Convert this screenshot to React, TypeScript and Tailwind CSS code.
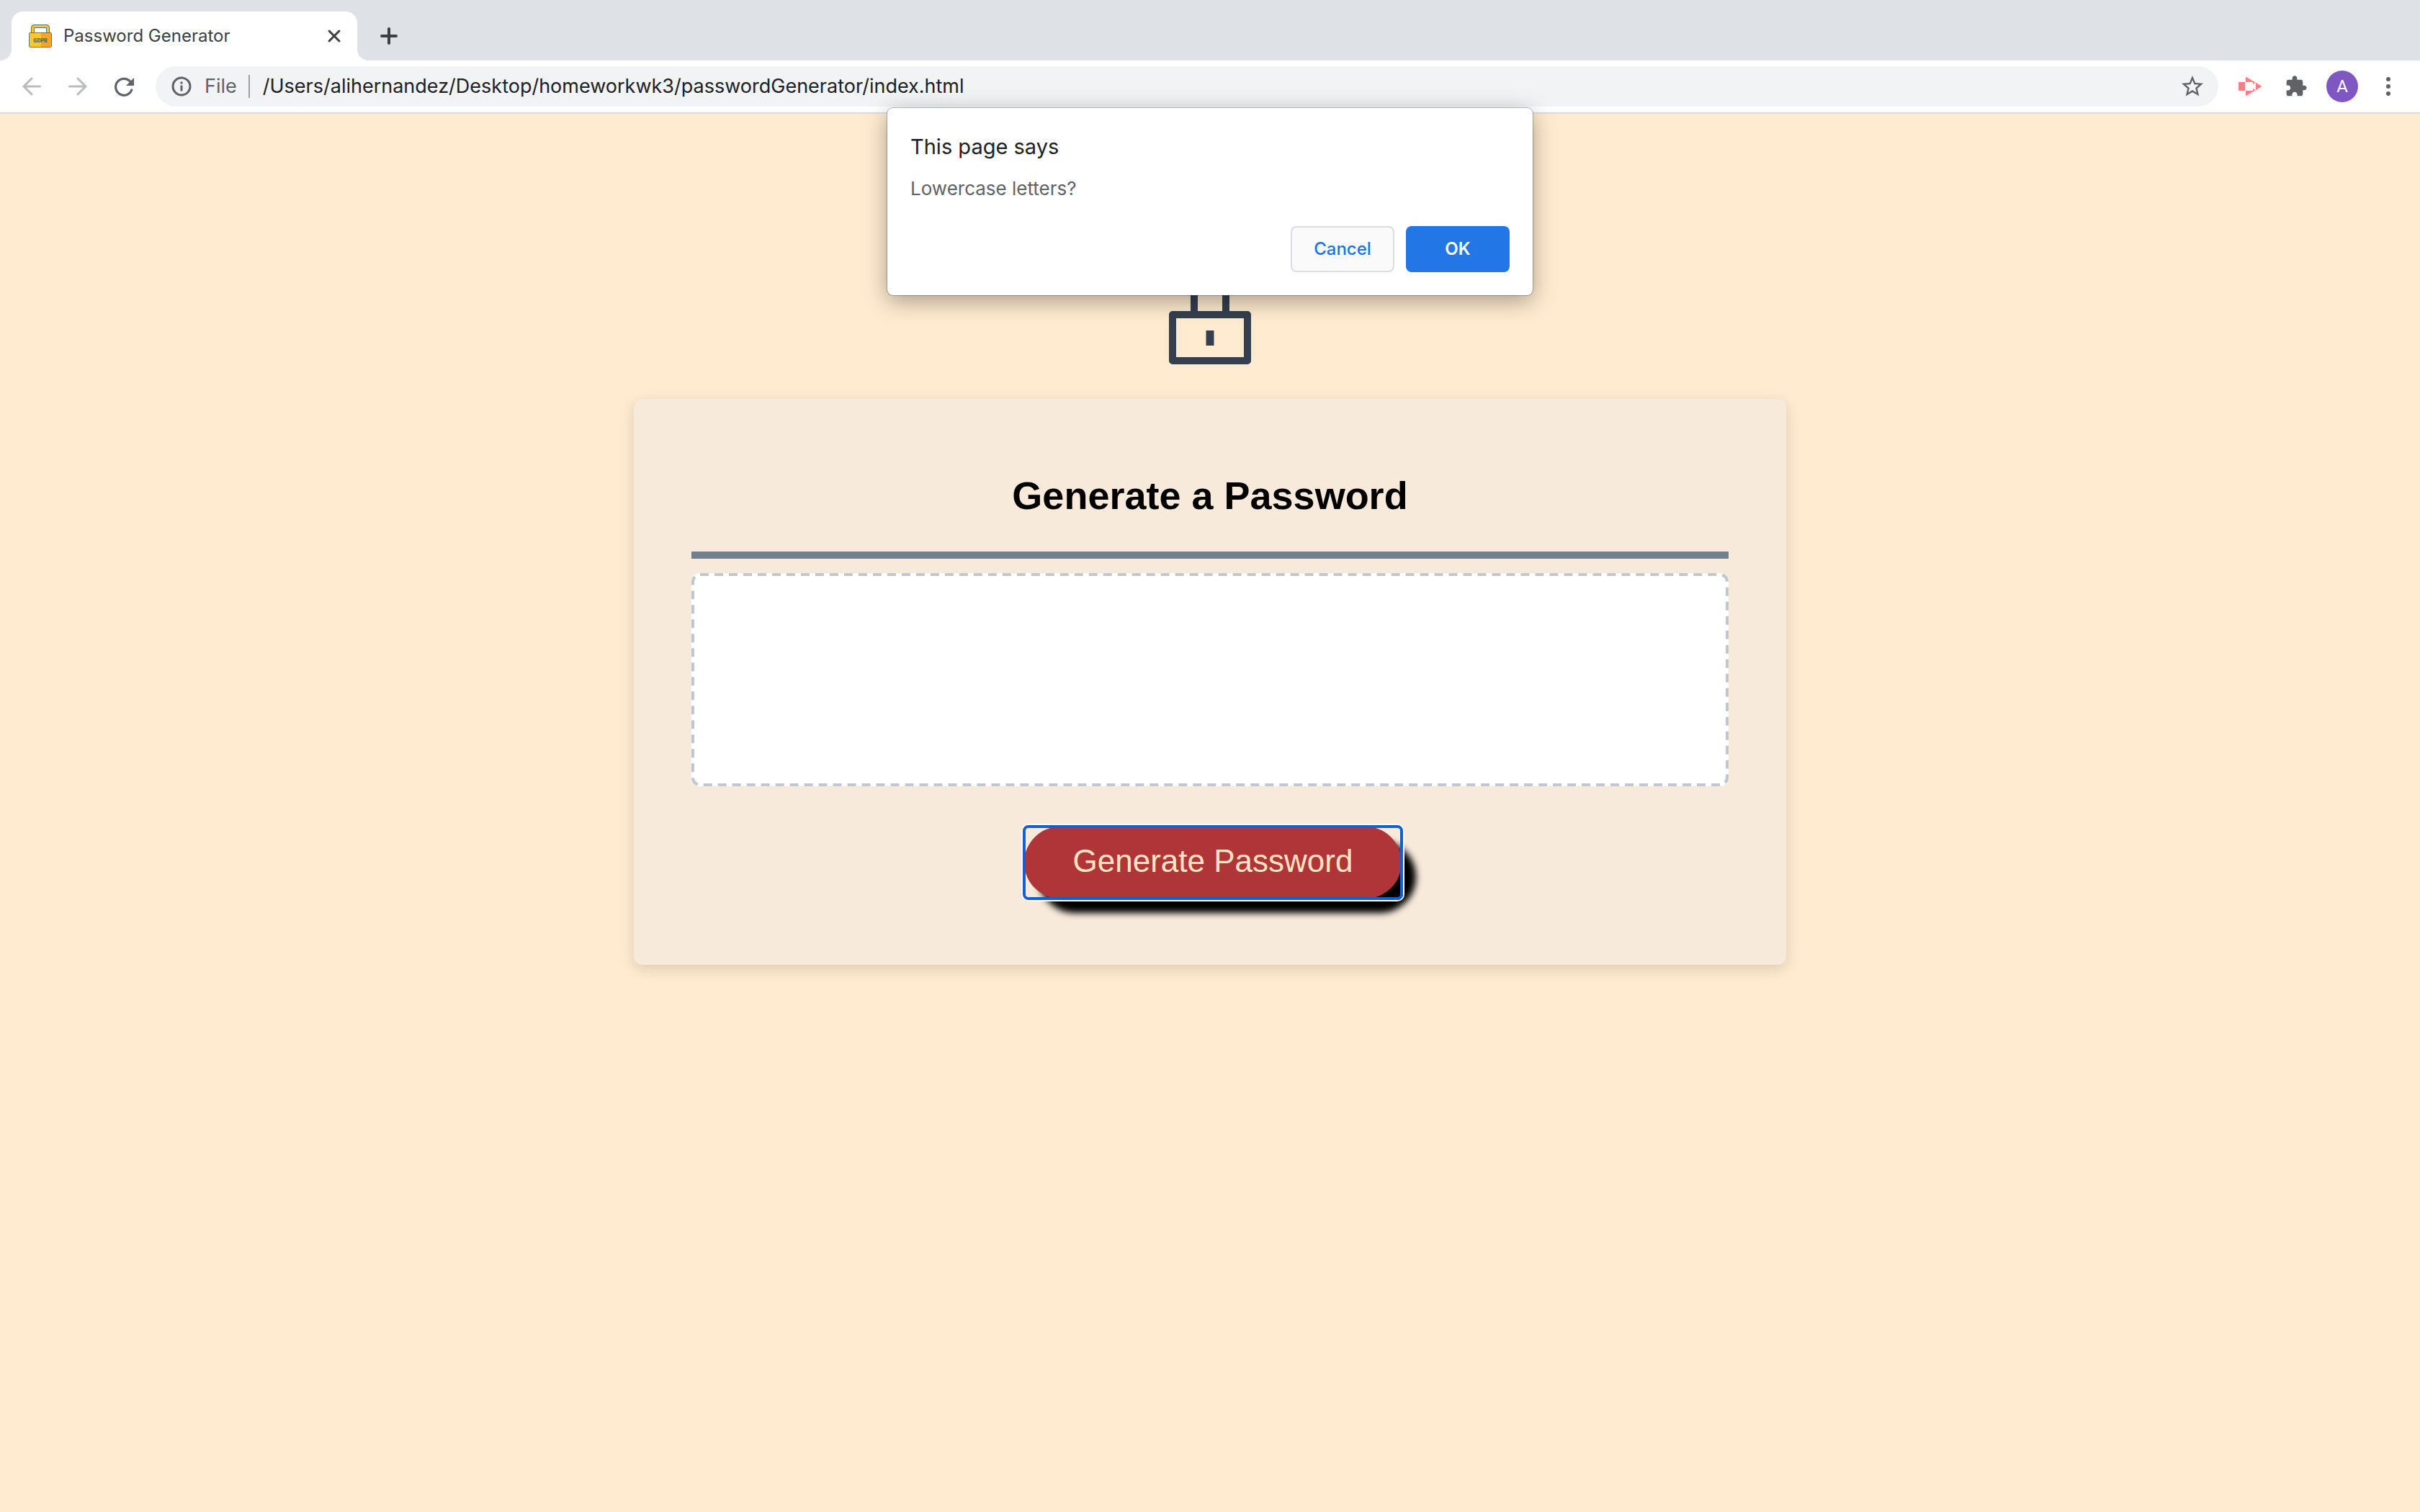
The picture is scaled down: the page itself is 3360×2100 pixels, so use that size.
import React from "react";

const iconButton = "flex size-8 shrink-0 items-center justify-center";

function Favicon() {
  return (
    <svg viewBox="0 0 32 32" className="size-8 shrink-0" aria-hidden="true">
      <path d="M5.500 13V5Q5.500 2.500 8 2.500H24Q26.500 2.500 26.500 5V13" fill="none" stroke="#4f7482" strokeWidth="5" />
      <path d="M5.500 13V5Q5.500 2.500 8 2.500H24Q26.500 2.500 26.500 5V13" fill="none" stroke="#f8c62e" strokeWidth="3" />
      <rect x="0.500" y="11.500" width="31" height="20" rx="1" fill="#f8c62e" stroke="#5a7a70" />
      <path d="M17 12H31V31H17Z" fill="#f4a52b" />
      <text x="16" y="25" textAnchor="middle" fontSize="7" fontWeight="900" fill="#5f6f4a" className="font-['Inter',sans-serif]">GDPR</text>
    </svg>
  );
}

function TabStrip() {
  return (
    <header className="flex h-21 items-end bg-[#dee1e6] pl-4">
      <div className="relative flex h-17 w-120 items-center rounded-t-2xl bg-white pr-5 pl-6">
        <span className="absolute bottom-0 -left-4 size-4 bg-[radial-gradient(circle_at_0_0,#dee1e6_16px,#fff_16px)]" />
        <span className="absolute -right-4 bottom-0 size-4 bg-[radial-gradient(circle_at_100%_0,#dee1e6_16px,#fff_16px)]" />
        <Favicon />
        <span className="ml-4 flex-1 text-2xl text-[#3c4043]">Password Generator</span>
        <button type="button" aria-label="Close tab" className="flex size-6 items-center justify-center">
          <svg viewBox="0 0 24 24" className="size-6" stroke="#3c4043" strokeWidth="3" strokeLinecap="round">
            <path d="M5 5L19 19M19 5L5 19" />
          </svg>
        </button>
      </div>
      <button type="button" aria-label="New tab" className="mb-5 ml-7.5 flex size-7 items-center justify-center">
        <svg viewBox="0 0 28 28" className="size-7" stroke="#3c4043" strokeWidth="4" strokeLinecap="round">
          <path d="M14 4V24M4 14H24" />
        </svg>
      </button>
    </header>
  );
}

function Toolbar() {
  return (
    <nav className="flex h-[74px] items-center border-b-2 border-[#dadce0] bg-white px-7">
      <button type="button" aria-label="Back" className={iconButton}>
        <svg viewBox="0 0 32 32" className="size-8" fill="none" stroke="#babcbe" strokeWidth="3" strokeLinecap="round">
          <path d="M27.500 16H5M16 5L5 16L16 27" />
        </svg>
      </button>
      <button type="button" aria-label="Forward" className={iconButton + " ml-8"}>
        <svg viewBox="0 0 32 32" className="size-8" fill="none" stroke="#babcbe" strokeWidth="3" strokeLinecap="round">
          <path d="M4.500 16H27M16 5L27 16L16 27" />
        </svg>
      </button>
      <button type="button" aria-label="Reload" className={iconButton + " ml-8"}>
        <svg viewBox="0 0 32 32" className="size-8" fill="none" stroke="#5f6368" strokeWidth="3.200" strokeLinecap="round">
          <path d="M26.800 21A11.500 11.500 0 1 1 25 9.500" />
          <path d="M30 4V15H19Z" fill="#5f6368" stroke="none" />
        </svg>
      </button>
      <div className="ml-7 flex h-14 flex-1 items-center rounded-full bg-[#f1f3f4] pr-4.5 pl-5.5">
        <svg viewBox="0 0 28 28" className="size-7 shrink-0" fill="none" stroke="#5f6368" strokeWidth="3" aria-hidden="true">
          <circle cx="14" cy="14" r="12" />
          <path d="M14 12.500V20.500M14 7.500V10.500" />
        </svg>
        <span className="ml-4.5 text-[27px] text-[#5f6368]">File</span>
        <span className="ml-4 h-8 w-0.5 bg-[#9aa0a6]" />
        <input
          aria-label="Address"
          readOnly
          value="/Users/alihernandez/Desktop/homeworkwk3/passwordGenerator/index.html"
          className="ml-4.5 flex-1 bg-transparent text-[27px] text-[#202124] outline-none"
        />
        <button type="button" aria-label="Bookmark this page" className="flex size-9 shrink-0 items-center justify-center">
          <svg viewBox="0 0 24 24" className="size-9" fill="#5f6368">
            <path d="M22 9.240l-7.190-.620L12 2 9.190 8.630 2 9.240l5.460 4.730L5.820 21 12 17.270 18.180 21l-1.630-7.030L22 9.240zM12 15.400l-3.760 2.270 1-4.280-3.320-2.880 4.380-.380L12 6.100l1.710 4.040 4.380.380-3.320 2.880 1 4.280L12 15.400z" />
          </svg>
        </button>
      </div>
      <button type="button" aria-label="Screen recorder" className={iconButton + " ml-7"}>
        <svg viewBox="0 0 32 32" className="size-8" fill="#ff8080">
          <path d="M1 10H9V22H1Q0 22 0 21V11Q0 10 1 10Z" />
          <path d="M10 4Q10 2.500 11.500 3.300L31 15Q32.500 16 31 17L11.500 28.700Q10 29.500 10 28Z" />
          <path d="M10 10H19Q20 10 20 11V13L24 10.500V21.500L20 19V21Q20 22 19 22H10Z" fill="#fff" />
        </svg>
      </button>
      <button type="button" aria-label="Extensions" className={iconButton + " ml-8"}>
        <svg viewBox="0 0 24 24" className="size-8" fill="#5f6368">
          <path d="M20.500 11H19V7c0-1.100-.900-2-2-2h-4V3.500C13 2.120 11.880 1 10.500 1S8 2.120 8 3.500V5H4c-1.100 0-1.990.900-1.990 2v3.800H3.500c1.490 0 2.700 1.210 2.700 2.700s-1.210 2.700-2.700 2.700H2V20c0 1.100.900 2 2 2h3.800v-1.500c0-1.490 1.210-2.700 2.700-2.700 1.490 0 2.700 1.210 2.700 2.700V22H17c1.100 0 2-.900 2-2v-4h1.500c1.380 0 2.500-1.120 2.500-2.500S21.880 11 20.500 11z" />
        </svg>
      </button>
      <button type="button" aria-label="Profile" className="ml-6.5 flex size-11 items-center justify-center rounded-full bg-[#7e57c2] font-['Roboto',sans-serif] text-2xl text-white">
        A
      </button>
      <button type="button" aria-label="Menu" className={iconButton + " ml-6.5"}>
        <svg viewBox="0 0 32 32" className="size-8" fill="#5f6368">
          <circle cx="16" cy="6" r="3" />
          <circle cx="16" cy="16" r="3" />
          <circle cx="16" cy="26" r="3" />
        </svg>
      </button>
    </nav>
  );
}

function ConfirmDialog() {
  return (
    <section
      role="dialog"
      aria-labelledby="dialog-title"
      className="absolute top-[150px] left-1/2 w-224 -translate-x-1/2 rounded-lg bg-white p-8 shadow-[0_0_0_1px_rgba(0,0,0,0.25),0_8px_32px_rgba(0,0,0,0.35)]"
    >
      <h2 id="dialog-title" className="text-[29px] leading-11 text-[#202124]">This page says</h2>
      <p className="mt-5 text-[26px] leading-8 text-[#5f6368]">Lowercase letters?</p>
      <div className="mt-9 flex justify-end gap-4 text-2xl font-semibold">
        <button type="button" className="h-16 w-36 rounded-lg border-2 border-[#dadce0] bg-[#fafafa] font-medium text-[#1a73e8]">Cancel</button>
        <button type="button" className="h-16 w-36 rounded-lg bg-[#2376e5] text-white">OK</button>
      </div>
    </section>
  );
}

function LockImage() {
  return (
    <svg viewBox="0 0 116 140" className="mx-auto h-35 w-29" fill="none" stroke="#353f4f" strokeWidth="10" aria-hidden="true">
      <path d="M36 71V36Q36 5 58 5T80 36V71" />
      <rect x="6" y="71" width="104" height="64" strokeLinejoin="round" />
      <path d="M58 93V114" strokeWidth="11" />
    </svg>
  );
}

function PasswordBox() {
  return (
    <div className="relative mt-5">
      <textarea
        aria-label="Your secure password"
        readOnly
        className="block h-74 w-full resize-none rounded-xl bg-white p-5 text-[44px] outline-none"
      />
      <svg className="pointer-events-none absolute inset-0 size-full" fill="none" aria-hidden="true">
        <rect
          x="2"
          y="2"
          rx="10"
          pathLength={3440}
          strokeDasharray="12 8"
          stroke="#c0c7d0"
          strokeWidth="4"
          className="h-[calc(100%-4px)] w-[calc(100%-4px)]"
        />
      </svg>
    </div>
  );
}

export default function App() {
  return (
    <div className="relative flex min-h-screen flex-col bg-[#ffebd0] font-['Inter',sans-serif]">
      <TabStrip />
      <Toolbar />
      <main className="flex-1 px-220 pt-52 font-['Liberation_Sans',Arial,sans-serif]">
        <LockImage />
        <section className="mt-12 rounded-xl bg-[#f7eadb] px-20 pt-25 pb-23 shadow-[0_6px_20px_rgba(0,0,0,0.14)]">
          <h1 className="text-center text-[54px] leading-17 font-bold text-black">Generate a Password</h1>
          <hr className="mt-11 border-t-10 border-[#708090]" />
          <PasswordBox />
          <hr className="mt-5 border-t-4 border-[#f9ead8]" />
          <div className="mt-8 flex justify-center pl-2">
            <button
              type="button"
              className="relative h-25 rounded-full bg-[#b03538] px-17 pb-1 text-[44px] text-[#ffe4c4] shadow-[20px_20px_10px_#000] after:absolute after:-inset-0.5 after:rounded-lg after:border-4 after:border-[#1062d0] after:ring-2 after:ring-white"
            >
              Generate Password
            </button>
          </div>
        </section>
      </main>
      <ConfirmDialog />
    </div>
  );
}
